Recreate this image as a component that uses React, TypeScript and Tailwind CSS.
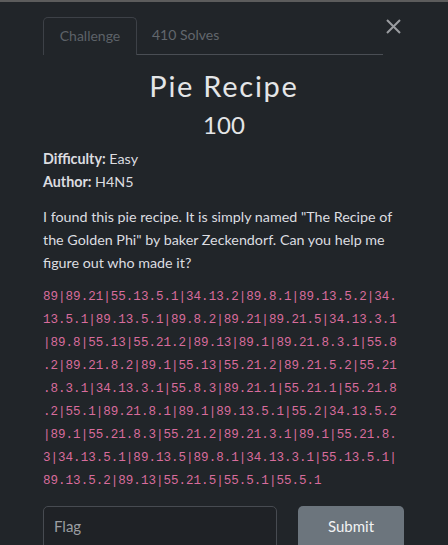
const CODE_LINES = [
  "89|89.21|55.13.5.1|34.13.2|89.8.1|89.13.5.2|34.",
  "13.5.1|89.13.5.1|89.8.2|89.21|89.21.5|34.13.3.1",
  "|89.8|55.13|55.21.2|89.13|89.1|89.21.8.3.1|55.8",
  ".2|89.21.8.2|89.1|55.13|55.21.2|89.21.5.2|55.21",
  ".8.3.1|34.13.3.1|55.8.3|89.21.1|55.21.1|55.21.8",
  ".2|55.1|89.21.8.1|89.1|89.13.5.1|55.2|34.13.5.2",
  "|89.1|55.21.8.3|55.21.2|89.21.3.1|89.1|55.21.8.",
  "3|34.13.5.1|89.13.5|89.8.1|34.13.3.1|55.13.5.1|",
  "89.13.5.2|89.13|55.21.5|55.5.1|55.5.1",
];

export default function App() {
  return (
    <div
      className="h-[545px] w-[448px] overflow-hidden bg-[#212529] border-t-2 border-[#5c5c5c] text-[#dcdde0]"
      style={{ fontFamily: "Lato, 'Noto Sans', sans-serif" }}
    >
      {/* Tabs + close */}
      <div className="flex items-start pl-[43px] pt-[15px]">
        <div className="flex w-[340px] border-b border-[#4a4e54]">
          <div className="-mb-px h-[38px] w-[94px] rounded-t-[5px] border border-b-0 border-[#3d4147] bg-[#212529] flex items-center justify-center pb-[2px] text-[14px] text-[#5d6268]">
            Challenge
          </div>
          <div className="h-[37px] flex items-center pl-[15px] pb-[2px] text-[14px] text-[#62676d]">
            410 Solves
          </div>
        </div>
        <button className="ml-[3px] mt-[2px] text-[#9a9ca0]">
          <svg width="15" height="15" viewBox="0 0 15 15" fill="none" stroke="currentColor" strokeWidth="2">
            <path d="M1 1 L14 14 M14 1 L1 14" />
          </svg>
        </button>
      </div>

      {/* Title */}
      <div className="mt-[13px] text-center text-[29px] leading-[36px] tracking-[0.06em] text-[#e4e5e7]">
        Pie Recipe
      </div>
      <div className="mt-[6px] text-center text-[24px] leading-[30px] text-[#e4e5e7]">100</div>

      <div className="px-[43px]">
        <div className="mt-[7px] text-[14.3px] leading-[23px]">
          <div>
            <span className="font-bold">Difficulty:</span> Easy
          </div>
          <div>
            <span className="font-bold">Author:</span> H4N5
          </div>
        </div>

        <p className="mt-[12px] w-[362px] text-[14.3px] leading-[23px]">
          I found this pie recipe. It is simply named "The Recipe of the Golden Phi" by baker Zeckendorf. Can you help me
          figure out who made it?
        </p>

        <div
          className="mt-[12px] text-[12.55px] leading-[23px] text-[#d86c9c] whitespace-pre"
          style={{ fontFamily: "'Liberation Mono', monospace" }}
        >
          {CODE_LINES.map((line, i) => (
            <div key={i}>{line}</div>
          ))}
        </div>

        <div className="mt-[13px] flex gap-[21px]">
          <div className="h-[44px] w-[234px] rounded-[5px] border border-[#474b51] bg-[#1f2226] px-[10px] pt-[8px] text-[15px] text-[#9b9ea2]">
            Flag
          </div>
          <button className="h-[44px] w-[106px] rounded-[5px] bg-[#6c757d] pb-[4px] text-[15px] text-[#f1f2f3]">
            Submit
          </button>
        </div>
      </div>
    </div>
  );
}
